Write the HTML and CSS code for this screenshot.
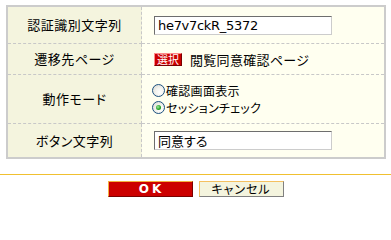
FILE: index.html
```html
<!DOCTYPE html>
<html lang="ja">
<head>
<meta charset="utf-8">
<link rel="stylesheet" href="styles.css">
</head>
<body>
<table class="form">
  <tr class="r1">
    <th>認証識別文字列</th>
    <td><div class="input">he7v7ckR_5372</div></td>
  </tr>
  <tr class="r2">
    <th>遷移先ページ</th>
    <td><div class="line"><span class="badge">選択</span><span class="val">閲覧同意確認ページ</span></div></td>
  </tr>
  <tr class="r3">
    <th>動作モード</th>
    <td>
      <div class="radios">
        <label class="opt"><span class="radio"></span><span class="otext">確認画面表示</span></label>
        <label class="opt"><span class="radio on"></span><span class="otext">セッションチェック</span></label>
      </div>
    </td>
  </tr>
  <tr class="r4">
    <th>ボタン文字列</th>
    <td><div class="input">同意する</div></td>
  </tr>
</table>
<div class="rule"></div>
<div class="buttons">
  <span class="btn ok">OK</span>
  <span class="btn cancel">キャンセル</span>
</div>
</body>
</html>
```
FILE: styles.css
```css
html, body {
  margin: 0;
  background: #ffffff;
}
body {
  padding: 5px 0 0 6px;
  font-family: "Noto Sans CJK JP", "Liberation Sans", sans-serif;
  font-size: 13px;
  font-feature-settings: "palt";
  color: #000;
}
.form {
  border-collapse: collapse;
  width: 380px;
  border: 2px solid #cccccc;
}
.form th {
  width: 133px;
  background: #f4f4de;
  font-weight: normal;
  text-align: center;
  padding: 0;
  border-right: 1px dashed #c8c8c8;
  border-bottom: 1px dashed #c8c8c8;
  line-height: 16px;
  letter-spacing: 0.5px;
}
.form td {
  background: #fffff0;
  padding: 0 0 0 12px;
  border-bottom: 1px dashed #c8c8c8;
}
.r1 th, .r1 td { height: 36px; }
.r2 th, .r2 td { height: 30px; }
.r3 th, .r3 td { height: 48px; }
.r4 th, .r4 td { height: 33px; }
.input {
  box-sizing: border-box;
  width: 178px;
  height: 19px;
  border: 1px solid #cccccc;
  border-top-color: #6e6e6e;
  border-left-color: #6e6e6e;
  background: #fff;
  font-family: "DejaVu Sans", "Noto Sans CJK JP", sans-serif;
  font-size: 13px;
  line-height: 17px;
  padding-left: 3px;
  letter-spacing: -0.3px;
}
.r4 .input {
  font-family: "Noto Sans CJK JP", sans-serif;
  letter-spacing: 0;
}
.line {
  display: flex;
  align-items: center;
  gap: 8px;
}
.val {
  letter-spacing: 0.3px;
}
.badge {
  box-sizing: border-box;
  width: 28px;
  height: 13px;
  background: #cc0000;
  color: #fff;
  font-size: 11px;
  line-height: 11px;
  text-align: center;
  border: 1px solid #7a0000;
  border-top-color: #ff8a8a;
  border-left-color: #ff8a8a;
}
.radios {
  display: flex;
  flex-direction: column;
  margin-left: -2px;
}
.opt {
  display: flex;
  align-items: center;
  height: 17.5px;
}
.otext {
  font-size: 12px;
  line-height: 17.5px;
  letter-spacing: 0.3px;
}
.radio {
  box-sizing: border-box;
  width: 13px;
  height: 13px;
  border-radius: 50%;
  border: 1px solid #1c5180;
  background: radial-gradient(circle at 65% 65%, #ffffff 0, #f4f4f0 40%, #d4d4cc 100%);
  margin-right: 1px;
  display: flex;
  align-items: center;
  justify-content: center;
}
.radio.on::after {
  content: "";
  width: 5px;
  height: 5px;
  border-radius: 50%;
  background: radial-gradient(circle at 40% 40%, #9fe89f 0, #21a121 60%, #1a7a1a 100%);
}
.rule {
  height: 1px;
  background: #f0c030;
  margin: 15px 0 0 -6px;
  width: 391px;
}
.buttons {
  display: flex;
  justify-content: center;
  gap: 6px;
  margin: 6px 0 0 -6px;
  width: 391px;
}
.btn {
  box-sizing: border-box;
  width: 85px;
  height: 16px;
  text-align: center;
  line-height: 14px;
}
.ok {
  background: #cc0000;
  color: #fff;
  font-family: "DejaVu Sans", sans-serif;
  font-weight: bold;
  font-size: 12px;
  letter-spacing: 3px;
  padding-left: 3px;
  border: 1px solid #7a0000;
  border-top-color: #f4b040;
  border-left-color: #f4b040;
}
.cancel {
  background: #f4f4de;
  font-size: 12px;
  letter-spacing: 1px;
  border: 1px solid #808080;
  border-top-color: #f4c060;
  border-left-color: #f4c060;
}
```
